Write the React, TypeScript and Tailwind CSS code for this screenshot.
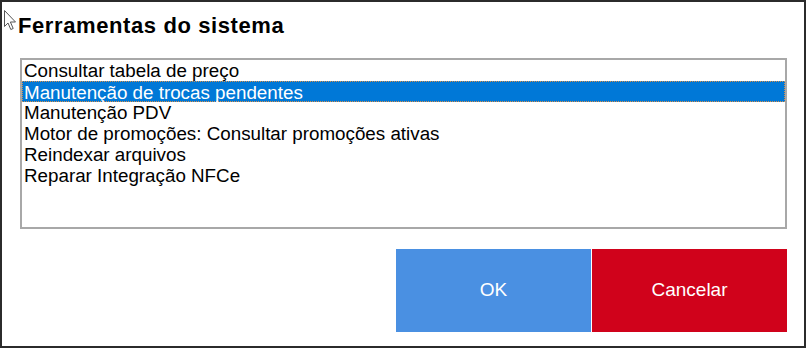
const items = [
  "Consultar tabela de preço",
  "Manutenção de trocas pendentes",
  "Manutenção PDV",
  "Motor de promoções: Consultar promoções ativas",
  "Reindexar arquivos",
  "Reparar Integração NFCe",
];

function Cursor() {
  return (
    <svg
      className="absolute left-[1px] top-[7px]"
      width="14"
      height="22"
      viewBox="0 0 14 22"
    >
      <path
        d="M1.5 1.5 L1.5 17.5 L5 14 L7.8 20.5 L10.2 19.5 L7.4 13 L12.5 13 Z"
        fill="#fff"
        stroke="#555"
        strokeWidth="1"
        strokeLinejoin="miter"
      />
    </svg>
  );
}

export default function App() {
  const selected = 1;
  return (
    <div className="w-[808px] h-[352px] bg-white font-['Liberation_Sans',Arial,sans-serif] text-black">
      <div className="relative w-[806px] h-[348px] border-2 border-[#2b2b2b] bg-white">
        <Cursor />
        <div className="pt-[12px] pl-[16px] text-[22px] leading-[24px] font-bold tracking-[0.6px]">
          Ferramentas do sistema
        </div>

        <div className="mt-[20px] ml-[18px] w-[767px] h-[171px] border-2 border-[#a8a8a8]">
          {items.map((item, index) => (
            <div
              key={index}
              className={
                index === selected
                  ? "h-[21px] pl-[1px] text-[18.8px] leading-[21px] bg-[#0078d7] text-white border border-dotted border-[#d9904a]"
                  : "h-[21px] pl-[2px] text-[18.8px] leading-[21px] whitespace-nowrap"
              }
            >
              {item}
            </div>
          ))}
        </div>

        <div className="mt-[20px] ml-[394px] flex gap-[1px]">
          <button className="w-[195px] h-[83px] bg-[#4a90e2] text-white text-[19px] flex items-center justify-center">
            OK
          </button>
          <button className="w-[195px] h-[83px] bg-[#d0021b] text-white text-[19px] flex items-center justify-center">
            Cancelar
          </button>
        </div>
      </div>
    </div>
  );
}
